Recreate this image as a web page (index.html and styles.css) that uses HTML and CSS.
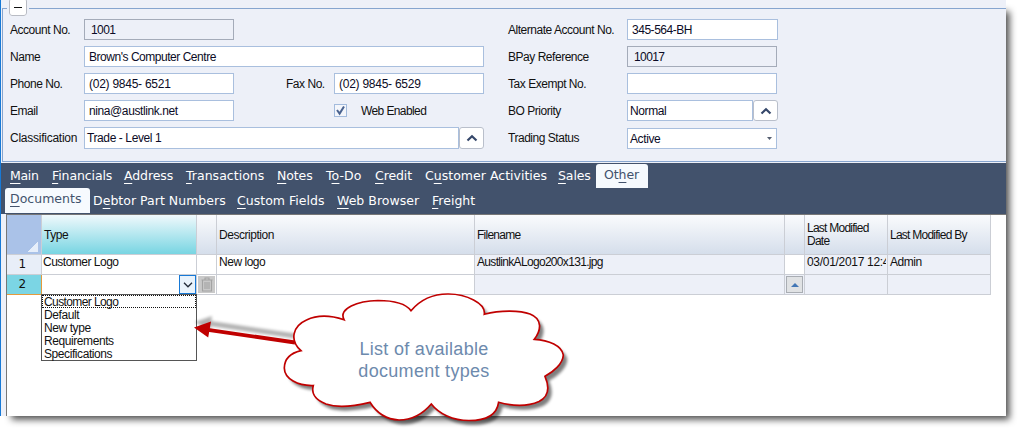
FILE: index.html
```html
<!DOCTYPE html>
<html lang="en">
<head>
<meta charset="utf-8">
<title>Debtor Account</title>
<link rel="stylesheet" href="styles.css">
</head>
<body>
<div class="window">
  <section class="account">
    <button class="collapse" aria-label="Collapse"></button>
    <div class="form">
      <label class="lbl">Account No.</label>
      <div class="field readonly w150 indent">1001</div>
      <label class="lbl second">Alternate Account No.</label>
      <div class="field w151">345-564-BH</div>

      <label class="lbl">Name</label>
      <div class="field w400">Brown's Computer Centre</div>
      <label class="lbl second">BPay Reference</label>
      <div class="field readonly w150 indent">10017</div>

      <label class="lbl">Phone No.</label>
      <div class="pair">
        <div class="field w150 num">(02) 9845- 6521</div>
        <label class="lbl fax">Fax No.</label>
        <div class="field w150 num">(02) 9845- 6529</div>
      </div>
      <label class="lbl second">Tax Exempt No.</label>
      <div class="field w150"></div>

      <label class="lbl">Email</label>
      <div class="pair">
        <div class="field w150 mail">nina@austlink.net</div>
        <span class="check"><svg width="11" height="11" viewBox="0 0 11 11"><path d="M2 5l2.6 3.6L9 1.5" fill="none" stroke="#4a6390" stroke-width="2"/></svg></span>
        <label class="lbl web">Web Enabled</label>
      </div>
      <label class="lbl second">BO Priority</label>
      <div class="combo w151">
        <div class="field grow tight">Normal</div>
        <button class="up" aria-label="Select"><svg width="12" height="8" viewBox="0 0 12 8"><path d="M1.5 6.5L6 2.3l4.500 4.200" fill="none" stroke="#35476a" stroke-width="2.200"/></svg></button>
      </div>

      <label class="lbl wide">Classification</label>
      <div class="combo w400 tall">
        <div class="field grow tight">Trade - Level 1</div>
        <button class="up" aria-label="Select"><svg width="12" height="8" viewBox="0 0 12 8"><path d="M1.5 6.5L6 2.3l4.500 4.200" fill="none" stroke="#35476a" stroke-width="2.200"/></svg></button>
      </div>
      <label class="lbl second">Trading Status</label>
      <div class="field w150 tight select"><span>Active</span><svg width="5" height="3" viewBox="0 0 5 3"><path d="M0 0h5L2.500 3z" fill="#555e70"/></svg></div>
    </div>
  </section>

  <nav class="tabs">
    <div class="row primary">
      <a class="main"><u>M</u>ain</a><a class="fin"><u>F</u>inancials</a><a><u>A</u>ddress</a><a class="loose"><u>T</u>ransactions</a><a><u>N</u>otes</a><a class="loose">T<u>o</u>-Do</a><a><u>C</u>redit</a><a class="loose">C<u>u</u>stomer Activities</a><a><u>S</u>ales</a><a class="on">Ot<u>h</u>er</a>
    </div>
    <div class="row secondary">
      <a class="on loose"><u>D</u>ocuments</a><a class="loose">D<u>e</u>btor Part Numbers</a><a class="loose"><u>C</u>ustom Fields</a><a class="loose"><u>W</u>eb Browser</a><a class="loose"><u>F</u>reight</a>
    </div>
  </nav>

  <main class="pane">
    <div class="grid">
      <div class="h corner"></div>
      <div class="h active">Type</div>
      <div class="h"></div>
      <div class="h">Description</div>
      <div class="h narrow">Filename</div>
      <div class="h"></div>
      <div class="h narrow two">Last Modified<br>Date</div>
      <div class="h narrow">Last Modified By</div>

      <div class="n">1</div>
      <div class="c logo">Customer Logo</div>
      <div class="c"></div>
      <div class="c">New logo</div>
      <div class="c ro file">AustlinkALogo200x131.jpg</div>
      <div class="c"></div>
      <div class="c ro date"><span>03/01/2017 12:4</span></div>
      <div class="c ro">Admin</div>

      <div class="n current">2</div>
      <div class="c editor">
        <span class="drop"><svg width="10" height="6" viewBox="0 0 10 6"><path d="M1 .8l4 4 4-4" fill="none" stroke="#222b38" stroke-width="1.300"/></svg></span>
        <ul class="list">
          <li class="focus"><span>Customer Logo</span></li><li>Default</li><li>New type</li><li>Requirements</li><li>Specifications</li>
        </ul>
      </div>
      <div class="c tool"><span class="trash"><svg width="12" height="15" viewBox="0 0 12 15" fill="none" stroke="#a3a3a3"><path d="M.5 3h11M4 2.500V1h4v1.500M1.500 3v11h9V3M4 5v7M6 5v7M8 5v7" stroke-width="1.100"/></svg></span></div>
      <div class="c"></div>
      <div class="c ro"></div>
      <div class="c ro tool"><span class="attach"><svg width="8" height="4" viewBox="0 0 8 4"><path d="M0 4L4 0l4 4z" fill="#4377b5"/></svg></span></div>
      <div class="c ro"></div>
      <div class="c ro"></div>
    </div>
  </main>
</div>

<div class="callout">
  <svg width="400" height="141" viewBox="190 290 400 141">
    <defs>
      <filter id="soft" x="-20%" y="-50%" width="140%" height="200%"><feGaussianBlur stdDeviation="1.500"/></filter>
      <path id="cloud" d="M301 350.700C289 340 293 326 306.500 320C317 315 331 315.500 344 319.700C338 308 358 301 378 300.500C393 300.500 406 304 411 310.700C421 299 434 293.800 448.500 294C466 294 486 303 484.300 314.300C500 310 520 310 530 314C543 319 541 331 534.300 339.300C549 340 562 346 563.300 355C563 364 553 372 545 376.300C550 388 548 397 539 401.500C529 406 514 406.500 498.600 402.300C497 414 487 420.500 469 420.500C453 420.500 439 414 431.300 404C421 416 410 420 399 420C386 419.500 376 412 370 402.300C353 406.500 336 407.500 326 404C315 399.500 311 394 313.300 385.500C298 386 284.500 379 284.300 368C284.500 359 291 353 301 350.700Z"/>
    </defs>
    <g filter="url(#soft)" opacity=".3"><path d="M210 323.500l85 12.500" stroke="#000" stroke-width="5" fill="none"/><path d="M195 322l17-6-2 15z"/></g>
    <use href="#cloud" x="4" y="4.500" fill="#000" opacity=".5" filter="url(#soft)"/>
    <path d="M208 329.800l87 12.700" stroke="#c00000" stroke-width="3.800"/>
    <path d="M194 327.600l17-6-2.800 16z" fill="#c00000"/>
    <use href="#cloud" fill="#fff" stroke="#c00000" stroke-width="1.700"/>
  </svg>
  <p class="note">List of available<br>document types</p>
</div>
</body>
</html>
```

FILE: styles.css
```css
* { box-sizing: border-box; }
body {
  margin: 0;
  width: 1021px;
  height: 431px;
  overflow: hidden;
  position: relative;
  background: #fff;
  color: #111;
  font: 12px/14px "Liberation Sans", Arial, sans-serif;
  letter-spacing: -0.47px;
}
.window {
  width: 1006px;
  height: 416px;
  background: #edf0f8;
  border-left: 1px solid #1779d6;
  box-shadow: 7px 7px 7px -3.500px rgba(0, 0, 0, .7);
}
button { padding: 0; }

/* Account details */
.account {
  height: 154px;
  margin-left: 1px;
  border: 1px solid #86a5cf;
  border-right: 0;
  position: relative;
  top: 8px;
  margin-bottom: 9px;
}
.collapse {
  position: absolute;
  left: 6px;
  top: -11px;
  width: 18px;
  height: 18px;
  border: 1px solid #b9bcc4;
  border-radius: 3px;
  background: #fff;
  outline: 2px solid #edf0f8;
}
.collapse::after {
  content: "";
  display: block;
  width: 8px;
  height: 1px;
  margin: 1px auto 0;
  background: #111;
}
.form {
  display: grid;
  grid-template-columns: 74px 424px 119px 151px;
  grid-auto-rows: 27px;
  padding: 10px 0 0 7px;
}
.lbl { padding-top: 4px; white-space: nowrap; }
.wide { letter-spacing: -0.25px; }
.web { letter-spacing: -0.6px; }
.field {
  height: 21px;
  padding: 3px 4px;
  border: 1px solid #a9bfde;
  background: #fff;
  color: #0b0b26;
  white-space: nowrap;
}
.readonly { background: #edf0f8; border-color: #a4abb9; }
.indent { padding-left: 6px; letter-spacing: -0.6px; }
.tight { padding-left: 2px; letter-spacing: -0.4px; }
.w150 { width: 150px; }
.w151 { width: 151px; }
.w400 { width: 400px; }
.num { letter-spacing: -0.25px; }
.mail { letter-spacing: -0.4px; }
.pair { display: flex; }
.fax { width: 100px; padding-left: 52px; }
.check {
  width: 13px;
  height: 13px;
  margin: 4px 14px 0 100px;
  border: 1px solid #a3bbdd;
  background: #f4f6fb;
}
.check svg { display: block; }
.combo { display: flex; height: 21px; }
.tall, .tall .field { height: 22px; }
.grow { flex: 1; }
.up {
  width: 25px;
  border: 1px solid #b9bfcb;
  border-radius: 3px;
  background: #fff;
  display: flex;
  align-items: center;
  justify-content: center;
}
.select {
  display: flex;
  align-items: center;
  justify-content: space-between;
  margin-top: 1px;
}

/* Tabs */
.tabs {
  height: 51px;
  background: #42526c;
  color: #fff;
  font: 12.500px/25px "DejaVu Sans", Verdana, sans-serif;
  letter-spacing: -0.1px;
}
.tabs u { text-underline-offset: 3px; text-decoration-thickness: 1px; }
.row {
  display: grid;
  height: 25px;
  padding-left: 9px;
  white-space: nowrap;
}
.primary { grid-template-columns: 42px 72px 62px 91px 49px 49px 50px 133px 38px 52px; }
.secondary { grid-template-columns: 83px 144px 100px 95px 60px; }
.tabs .on {
  background: #f6fafe;
  color: #42526c;
  border-radius: 3px 3px 0 0;
  line-height: 21px;
}
.primary .on { margin-top: 1px; padding-left: 8px; }
.secondary .on { margin: 0 3px 0 -5px; padding-left: 5px; }
.fin { letter-spacing: -0.1px; }
.main { letter-spacing: -0.3px; }
.loose { letter-spacing: 0.02px; }

/* Document grid */
.pane {
  height: 202px;
  margin-left: 5px;
  border-left: 1px solid #777;
  border-top: 1px solid #777;
  background: #fff;
}
.grid {
  display: grid;
  grid-template-columns: 35px 155px 20px 258px 310px 20px 83px 103px;
  grid-template-rows: 40px 20px 20px;
  width: 984px;
}
.h, .c, .n {
  border-right: 1px solid #cbced5;
  border-bottom: 1px solid #cbced5;
  padding-left: 2px;
  white-space: nowrap;
}
.h {
  display: flex;
  align-items: center;
  padding-top: 2px;
  line-height: 13px;
  background: linear-gradient(#fafbfd, #d5deeb);
}
.two { padding-top: 1px; }
.narrow { letter-spacing: -0.75px; }
.corner {
  background: linear-gradient(135deg, transparent 50%, #e6eefa 50%) 21px 25px / 10px 12px no-repeat, #aac2e8;
}
.active { background: linear-gradient(#f0f9fc, #78d5e2); }
.c { background: #fff; line-height: 15px; overflow: hidden; }
.ro { background: #edf0f8; }
.logo { padding-left: 1px; letter-spacing: -0.5px; }
.file { letter-spacing: -0.68px; }
.date { letter-spacing: -0.3px; }
.date span { display: block; width: 79px; overflow: hidden; }
.n {
  padding: 2px 4px 0 0;
  text-align: center;
  background: #e8eef8;
  font: 12px/15px "DejaVu Sans", Verdana, sans-serif;
}
.current { background: #7bd5e4; border-color: #e59a3c; }
.editor {
  overflow: visible;
  position: relative;
  padding: 0;
  display: flex;
  justify-content: flex-end;
}
.drop {
  width: 17px;
  height: 19px;
  border: 1px solid #1779d6;
  background: #e9f3fc;
  display: flex;
  align-items: center;
  justify-content: center;
}
.list {
  position: absolute;
  left: -1px;
  top: 19px;
  width: 156px;
  height: 67px;
  margin: 0;
  padding: 0;
  list-style: none;
  background: #fff;
  border: 1px solid #555;
  line-height: 15px;
  letter-spacing: -0.42px;
}
.list li { height: 13px; padding-left: 2px; }
.list .focus { outline: 1px dotted #111; outline-offset: -1px; letter-spacing: -0.9px; letter-spacing: -0.85px; }
.list .focus span { letter-spacing: -0.6px; }
.tool { padding: 1px; }
.trash, .attach {
  display: flex;
  align-items: center;
  justify-content: center;
  height: 17px;
  background: #c9c9c9;
}
.attach { background: #e0e2e4; border: 1px solid #a9adb3; }

/* Annotation */
.callout { position: absolute; left: 190px; top: 290px; width: 400px; height: 141px; }
.callout svg { display: block; }
.note {
  position: absolute;
  left: 134px;
  top: 48px;
  width: 200px;
  margin: 0;
  text-align: center;
  color: #6d8aad;
  font-size: 18px;
  line-height: 22px;
  letter-spacing: 0.3px;
}
```
